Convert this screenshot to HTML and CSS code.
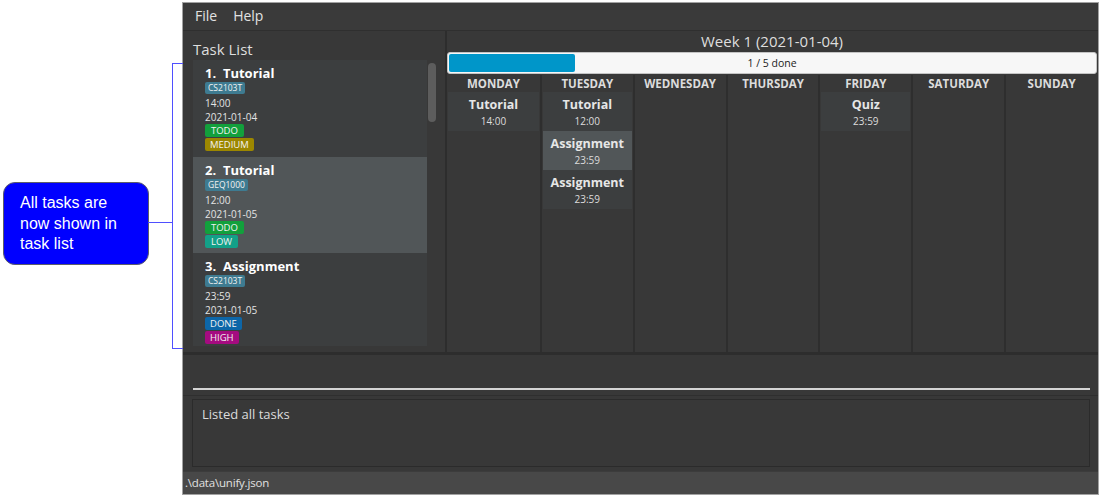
FILE: index.html
```html
<!DOCTYPE html>
<html lang="en">
<head>
<meta charset="utf-8">
<title>Unify</title>
<link rel="stylesheet" href="styles.css">
</head>
<body>
<div class="stage">
  <div class="annot">
    <div class="callout">All tasks are now shown in task list</div>
    <div class="connector"></div>
    <div class="bracket"></div>
  </div>
  <div class="window">
    <div class="menubar">
      <span class="menu-item">File</span>
      <span class="menu-item">Help</span>
    </div>
    <div class="main">
      <div class="left">
        <div class="panel-title">Task List</div>
        <div class="list">
          <div class="cells">
            <div class="cell even">
              <div class="cell-name">1.  Tutorial</div>
              <div class="tagrow"><span class="tag tag-mod">CS2103T</span></div>
              <div class="cell-line">14:00</div>
              <div class="cell-line">2021-01-04</div>
              <div class="tagrow"><span class="tag tag-todo">TODO</span></div>
              <div class="tagrow"><span class="tag tag-medium">MEDIUM</span></div>
            </div>
            <div class="cell odd">
              <div class="cell-name">2.  Tutorial</div>
              <div class="tagrow"><span class="tag tag-mod">GEQ1000</span></div>
              <div class="cell-line">12:00</div>
              <div class="cell-line">2021-01-05</div>
              <div class="tagrow"><span class="tag tag-todo">TODO</span></div>
              <div class="tagrow"><span class="tag tag-low">LOW</span></div>
            </div>
            <div class="cell even">
              <div class="cell-name">3.  Assignment</div>
              <div class="tagrow"><span class="tag tag-mod">CS2103T</span></div>
              <div class="cell-line">23:59</div>
              <div class="cell-line">2021-01-05</div>
              <div class="tagrow"><span class="tag tag-done">DONE</span></div>
              <div class="tagrow"><span class="tag tag-high">HIGH</span></div>
            </div>
          </div>
          <div class="scrollbar"><div class="thumb"></div></div>
        </div>
      </div>
      <div class="vdivider"></div>
      <div class="calendar">
        <div class="cal-title">Week 1 (2021-01-04)</div>
        <div class="progress">
          <div class="progress-fill" style="width: 19.5%"></div>
          <div class="progress-text">1 / 5 done</div>
        </div>
        <div class="week">
          <div class="day">
            <div class="day-name">MONDAY</div>
            <div class="card even"><div class="card-title">Tutorial</div><div class="card-time">14:00</div></div>
          </div>
          <div class="day">
            <div class="day-name">TUESDAY</div>
            <div class="card even"><div class="card-title">Tutorial</div><div class="card-time">12:00</div></div>
            <div class="card odd"><div class="card-title">Assignment</div><div class="card-time">23:59</div></div>
            <div class="card even"><div class="card-title">Assignment</div><div class="card-time">23:59</div></div>
          </div>
          <div class="day">
            <div class="day-name">WEDNESDAY</div>
          </div>
          <div class="day">
            <div class="day-name">THURSDAY</div>
          </div>
          <div class="day">
            <div class="day-name">FRIDAY</div>
            <div class="card even"><div class="card-title">Quiz</div><div class="card-time">23:59</div></div>
          </div>
          <div class="day">
            <div class="day-name">SATURDAY</div>
          </div>
          <div class="day">
            <div class="day-name">SUNDAY</div>
          </div>
        </div>
      </div>
    </div>
    <div class="hsep"></div>
    <div class="command">
      <div class="command-input"></div>
    </div>
    <div class="hsep-thin"></div>
    <div class="result-area">
      <div class="result-box">Listed all tasks</div>
    </div>
    <div class="statusbar">.\data\unify.json</div>
  </div>
</div>
</body>
</html>
```

FILE: styles.css
```css
* {
  box-sizing: border-box;
}

html, body {
  margin: 0;
  padding: 0;
  background: #ffffff;
}

body {
  width: 1102px;
  height: 497px;
  overflow: hidden;
  font-family: "Open Sans", "Noto Sans", "DejaVu Sans", sans-serif;
}

.stage {
  display: flex;
  padding-top: 2px;
  height: 497px;
}

/* ---------- annotation ---------- */
.annot {
  position: relative;
  width: 182px;
  flex: 0 0 182px;
}

.callout {
  position: absolute;
  left: 3px;
  top: 180px;
  width: 146px;
  height: 83px;
  background: #0000ff;
  border: 1px solid #5d5d6a;
  border-radius: 12px;
  color: #ffffff;
  font-family: "Liberation Sans", Arial, sans-serif;
  font-size: 16px;
  line-height: 20.5px;
  padding: 10px 8px 0 16px;
}

.connector {
  position: absolute;
  left: 148px;
  top: 220px;
  width: 25px;
  height: 0;
  border-top: 1.5px solid #4f4fff;
}

.bracket {
  position: absolute;
  left: 172px;
  top: 61px;
  width: 11px;
  height: 286px;
  border: 1.5px solid #4f4fff;
  border-right: none;
}

/* ---------- application window ---------- */
.window {
  width: 917px;
  height: 493px;
  border: 1px solid #a2a2a2;
  background: #383838;
  display: flex;
  flex-direction: column;
  color: #dcdcdc;
}

.menubar {
  height: 28px;
  flex: 0 0 28px;
  background: #3a3a3a;
  border-bottom: 1px solid #2f2f2f;
  display: flex;
  align-items: center;
  gap: 4px;
  padding-left: 6px;
  padding-bottom: 2px;
}

.menu-item {
  font-size: 14px;
  color: #e2e2e2;
  padding: 0 6px;
}

.main {
  height: 321px;
  flex: 0 0 321px;
  display: flex;
}

.left {
  width: 262px;
  flex: 0 0 262px;
  padding: 0 8px 6px 10px;
  display: flex;
  flex-direction: column;
}

.panel-title {
  height: 29px;
  padding-top: 8px;
  font-size: 15px;
  line-height: 21px;
  color: #dedede;
}

.list {
  height: 286px;
  display: flex;
  overflow: hidden;
}

.cells {
  flex: 1;
  display: flex;
  flex-direction: column;
}

.cell {
  height: 96.5px;
  flex: 0 0 auto;
  padding: 4px 0 0 12px;
  display: flex;
  flex-direction: column;
  align-items: flex-start;
}

.cell.even {
  background: #3c3e3f;
}

.cell.odd {
  background: #515658;
}

.cell-name {
  white-space: pre;
  font-size: 13px;
  font-weight: 700;
  line-height: 18px;
  color: #ffffff;
}

.cell-line {
  font-size: 10px;
  line-height: 14px;
  color: #e4e4e4;
}

.tagrow {
  display: flex;
  height: 14px;
  align-items: flex-start;
}

.tag {
  display: inline-block;
  height: 13px;
  line-height: 13px;
  font-size: 9.5px;
  padding: 0 4px;
  border-radius: 2px;
  color: #f2f2f2;
}

.tag-mod {
  background: #3e7b91;
  font-size: 8.5px;
  padding: 0 3px;
  height: 12px;
  line-height: 12px;
}

.tag-todo {
  background: #12a03c;
  padding: 0 6px;
}

.tag-medium {
  background: #9c8700;
  padding: 0 5px;
}

.tag-low {
  background: #13a088;
  padding: 0 6px;
}

.tag-done {
  background: #0d66a8;
  padding: 0 5px;
}

.tag-high {
  background: #a50b80;
  padding: 0 5px;
}

.scrollbar {
  width: 10px;
  flex: 0 0 10px;
  padding: 3px 1px 0 1px;
  background: #383838;
}

.thumb {
  height: 59px;
  width: 8px;
  border-radius: 4px;
  background: #5d5d5d;
}

.vdivider {
  width: 2px;
  flex: 0 0 2px;
  background: #2d2d2d;
}

.calendar {
  flex: 1;
  display: flex;
  flex-direction: column;
  padding-right: 1px;
}

.cal-title {
  height: 21px;
  text-align: center;
  font-size: 15px;
  line-height: 21px;
  color: #dedede;
}

.progress {
  position: relative;
  height: 22px;
  background: #f7f7f7;
  border: 1px solid #c4c4c4;
  border-radius: 3px;
  padding: 1px;
}

.progress-fill {
  height: 100%;
  background: #0096c9;
  border-radius: 2px;
}

.progress-text {
  position: absolute;
  left: 0;
  right: 0;
  top: 0;
  bottom: 0;
  text-align: center;
  font-size: 10.5px;
  line-height: 20px;
  color: #222222;
}

.week {
  flex: 1;
  margin-top: 1px;
  display: grid;
  grid-template-columns: repeat(7, 1fr);
}

.day {
  display: flex;
  flex-direction: column;
  border-left: 2px solid #2e2e2e;
}

.day:first-child {
  border-left: none;
}

.day-name {
  height: 17px;
  text-align: center;
  font-size: 11.5px;
  font-weight: 700;
  line-height: 18px;
  color: #dcdcdc;
}

.card {
  height: 39px;
  text-align: center;
  padding-top: 3px;
  margin: 0 1px;
}

.card.even {
  background: #3c3e3f;
}

.card.odd {
  background: #515658;
}

.card-title {
  font-size: 12.5px;
  font-weight: 700;
  line-height: 19px;
  color: #e6e6e6;
}

.card-time {
  font-size: 10px;
  line-height: 14px;
  color: #dcdcdc;
}

.hsep {
  height: 3px;
  flex: 0 0 3px;
  background: #2d2d2d;
}

.command {
  height: 40px;
  flex: 0 0 40px;
  padding: 0 8px 0 10px;
  display: flex;
  align-items: flex-end;
}

.command-input {
  flex: 1;
  height: 100%;
  border-bottom: 2px solid #d4d4d4;
  margin-bottom: 5px;
}

.hsep-thin {
  height: 1px;
  flex: 0 0 1px;
  background: #2f2f2f;
}

.result-area {
  height: 75px;
  flex: 0 0 75px;
  padding: 3px 8px 4px 9px;
}

.result-box {
  height: 100%;
  border: 1px solid #2b2b2b;
  padding: 5px 9px;
  font-size: 13px;
  line-height: 18px;
  color: #dcdcdc;
}

.statusbar {
  height: 23px;
  flex: 0 0 23px;
  background: #484848;
  border-top: 1px solid #3c3c3c;
  padding-left: 2px;
  font-size: 11.5px;
  letter-spacing: -0.2px;
  line-height: 22px;
  color: #e0e0e0;
}
```
